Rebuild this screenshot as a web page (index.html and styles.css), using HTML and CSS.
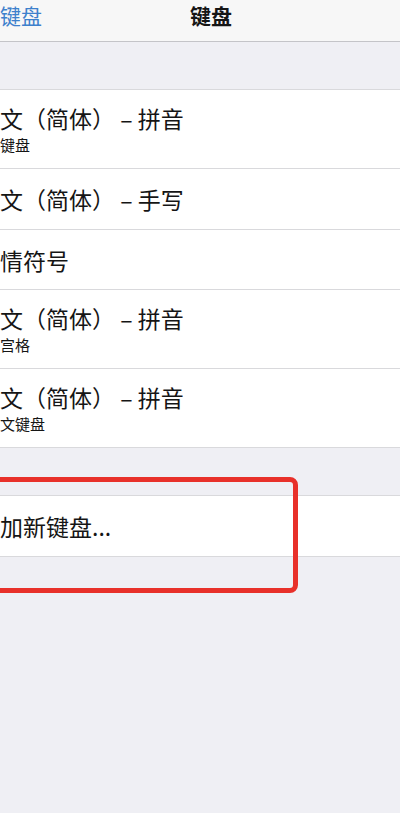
FILE: index.html
```html
<!DOCTYPE html>
<html lang="zh-CN">
<head>
  <meta charset="UTF-8">
  <meta name="viewport" content="width=device-width, initial-scale=1.0">
  <title>键盘</title>
  <link rel="stylesheet" href="styles.css">
</head>
<body>

  <div class="navbar">
    <a class="back" href="#">键盘</a>
    <div class="title">键盘</div>
  </div>

  <div class="group-gap"></div>

  <ul class="list">
    <li class="row tall">
      <div class="main">文（简体） – 拼音</div>
      <div class="sub">键盘</div>
    </li>
    <li class="row short">
      <div class="main">文（简体） – 手写</div>
    </li>
    <li class="row short last-short">
      <div class="main">情符号</div>
    </li>
    <li class="row tall">
      <div class="main">文（简体） – 拼音</div>
      <div class="sub">宫格</div>
    </li>
    <li class="row tall">
      <div class="main">文（简体） – 拼音</div>
      <div class="sub">文键盘</div>
    </li>
  </ul>

  <div class="group-gap"></div>

  <div class="add-section">
    <ul class="list">
      <li class="row short">
        <div class="main">加新键盘...</div>
      </li>
    </ul>
    <div class="highlight"></div>
  </div>

</body>
</html>
```

FILE: styles.css
```css
body {
  margin: 0;
  width: 400px;
  height: 813px;
  overflow: hidden;
  background-color: #efeff4;
  font-family: "Noto Sans CJK SC", "Noto Sans", sans-serif;
  color: #151515;
}
.navbar {
  display: flex;
  align-items: flex-start;
  height: 36px;
  padding-top: 5px;
  padding-right: 14px;
  background-color: #f7f7f7;
  border-bottom: 1px solid #c4c4c8;
}
.back {
  width: 36px;
  font-size: 21px;
  line-height: 21px;
  color: #3d80cc;
  text-decoration: none;
  white-space: nowrap;
}
.title {
  flex: 1;
  text-align: center;
  font-size: 21px;
  line-height: 21px;
  font-weight: bold;
}
.group-gap {
  height: 47px;
}
.list {
  list-style: none;
  margin: 0;
  padding: 0;
  background-color: #fff;
  border-top: 1px solid #d9d9dc;
}
.row {
  display: flex;
  flex-direction: column;
  justify-content: center;
  border-bottom: 1px solid #d9d9dc;
  white-space: nowrap;
}
.row.tall {
  height: 78px;
}
.row.short {
  height: 60px;
}
.row.last-short {
  height: 59px;
}
.main {
  font-size: 23px;
  line-height: 30px;
}
.sub {
  margin-top: 1px;
  font-size: 15px;
  line-height: 22px;
}
.add-section {
  position: relative;
}
.highlight {
  position: absolute;
  top: -18px;
  left: -20px;
  right: 102px;
  bottom: -36px;
  border: 5px solid #e8302a;
  border-radius: 8px;
}
```
